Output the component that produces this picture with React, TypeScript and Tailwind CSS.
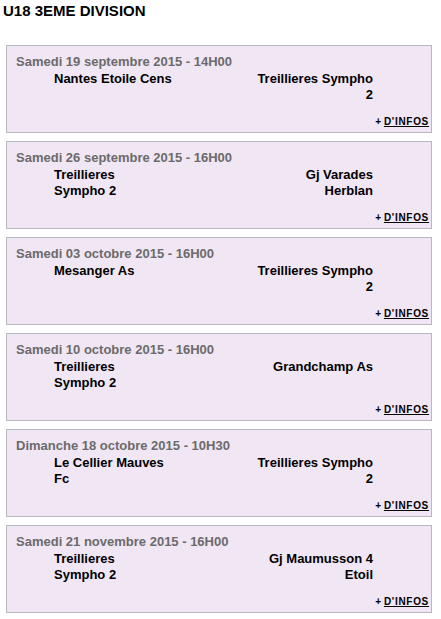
import React from 'react';

type Match = {
    date: string;
    home: string[];
    away: string[];
};

const matches: Match[] = [
    { date: 'Samedi 19 septembre 2015 - 14H00', home: ['Nantes Etoile Cens'], away: ['Treillieres Sympho', '2'] },
    { date: 'Samedi 26 septembre 2015 - 16H00', home: ['Treillieres', 'Sympho 2'], away: ['Gj Varades', 'Herblan'] },
    { date: 'Samedi 03 octobre 2015 - 16H00', home: ['Mesanger As'], away: ['Treillieres Sympho', '2'] },
    { date: 'Samedi 10 octobre 2015 - 16H00', home: ['Treillieres', 'Sympho 2'], away: ['Grandchamp As'] },
    { date: 'Dimanche 18 octobre 2015 - 10H30', home: ['Le Cellier Mauves', 'Fc'], away: ['Treillieres Sympho', '2'] },
    { date: 'Samedi 21 novembre 2015 - 16H00', home: ['Treillieres', 'Sympho 2'], away: ['Gj Maumusson 4', 'Etoil'] },
];

const MatchCard: React.FC<{ match: Match }> = ({ match }) => {
    return (
        <div className="border border-[#b8b8c0] bg-[#f1e6f3] pt-[8px] pb-[4px]">
            <div className="pl-[9px] text-[13px] leading-[16px] font-bold text-[#6b6b6b]">{match.date}</div>
            <div className="mt-[1px] h-[32px] flex justify-between pl-[47px] pr-[58px] text-[13px] leading-[16px] font-bold text-black">
                <div className="text-left">
                    {match.home.map((l) => (
                        <div key={l}>{l}</div>
                    ))}
                </div>
                <div className="text-right">
                    {match.away.map((l) => (
                        <div key={l}>{l}</div>
                    ))}
                </div>
            </div>
            <div className="mt-[13px] pr-[2px] text-right text-[10px] leading-[12px] font-bold text-black">
                + <a href="#" className="underline tracking-[0.7px]">D'INFOS</a>
            </div>
        </div>
    );
};

export default function App() {
    return (
        <div className="w-[441px] min-h-[619px] bg-white font-['Liberation_Sans',Arial,sans-serif]">
            <h1 className="pl-[3px] pt-[2px] text-[15px] leading-[17px] font-bold text-black">U18 3EME DIVISION</h1>
            <div className="mt-[26px] ml-[6px] w-[426px] flex flex-col gap-[8px]">
                {matches.map((m) => (
                    <MatchCard key={m.date} match={m} />
                ))}
            </div>
        </div>
    );
}
